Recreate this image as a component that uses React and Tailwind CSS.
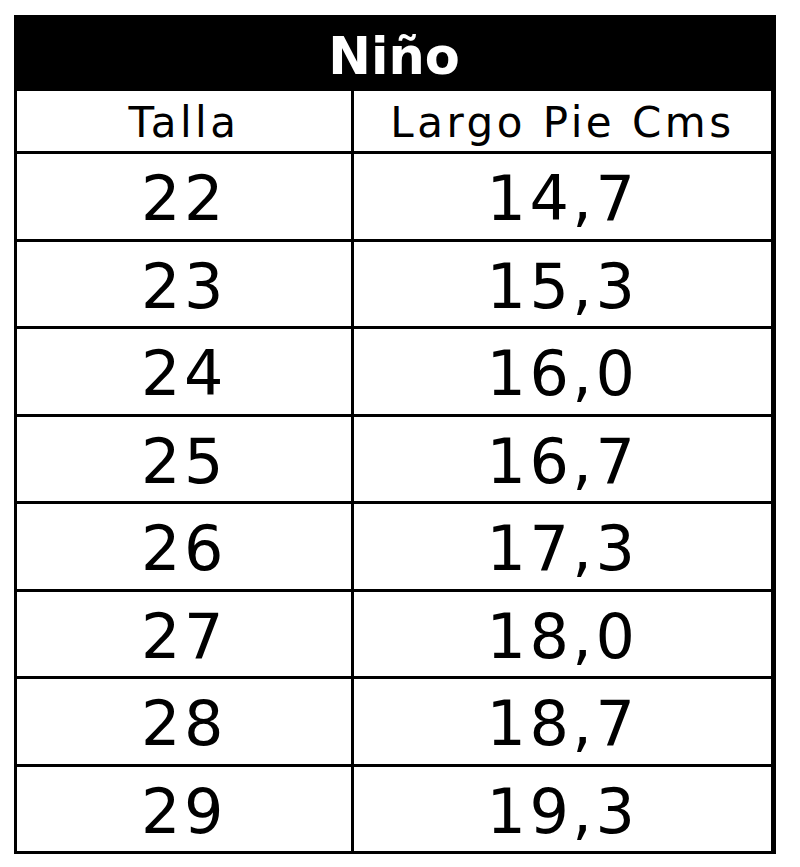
const sizes = [
  ['22', '14,7'],
  ['23', '15,3'],
  ['24', '16,0'],
  ['25', '16,7'],
  ['26', '17,3'],
  ['27', '18,0'],
  ['28', '18,7'],
  ['29', '19,3'],
]

export default function App() {
  return (
    <div className="min-h-[867px] w-[800px] bg-white pt-[15px] pl-[14px] font-['DejaVu_Sans',sans-serif] text-black">
      <div className="w-[762px] border-t-[3px] border-l-[3px] border-b-[3px] border-r-[5px] border-black">
        <div className="flex h-[73px] items-center justify-center bg-black pt-[3px] text-[51px] leading-none font-bold text-white">
          Niño
        </div>
        <div className="grid h-[60px] grid-cols-[334px_1fr] text-[42px] leading-none tracking-[3.5px]">
          <div className="flex items-center justify-center pt-[4px]">Talla</div>
          <div className="flex items-center justify-center border-l-[3px] border-black pt-[4px]">Largo Pie Cms</div>
        </div>
        {sizes.map(([talla, largo]) => (
          <div
            key={talla}
            className="grid h-[87.5px] grid-cols-[334px_1fr] border-t-[3px] border-black text-[62px] leading-none tracking-[3.5px]"
          >
            <div className="flex items-center justify-center pt-[6px]">{talla}</div>
            <div className="flex items-center justify-center border-l-[3px] border-black pt-[6px]">{largo}</div>
          </div>
        ))}
      </div>
    </div>
  )
}
